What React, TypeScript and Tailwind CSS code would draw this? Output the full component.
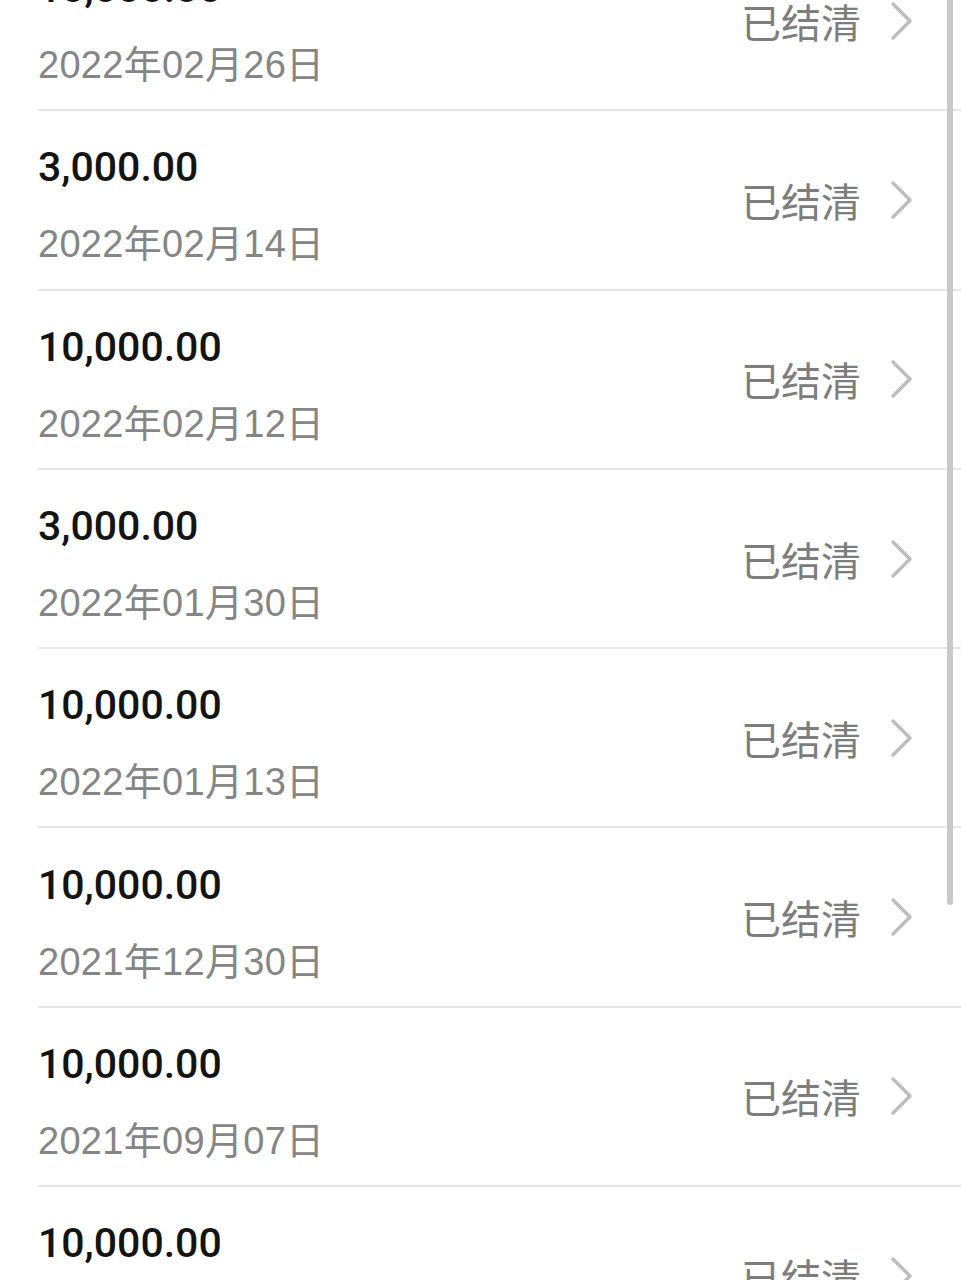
const rows = [
  { amount: "10,000.00", date: "2022年02月26日" },
  { amount: "3,000.00", date: "2022年02月14日" },
  { amount: "10,000.00", date: "2022年02月12日" },
  { amount: "3,000.00", date: "2022年01月30日" },
  { amount: "10,000.00", date: "2022年01月13日" },
  { amount: "10,000.00", date: "2021年12月30日" },
  { amount: "10,000.00", date: "2021年09月07日" },
  { amount: "10,000.00", date: "2021年08月20日" },
];

const Chevron = () => (
  <svg width="26" height="40" viewBox="0 0 26 40" fill="none">
    <path d="M4 3 L21 20 L4 37" stroke="#bdbdbd" strokeWidth="3.5" strokeLinecap="round" strokeLinejoin="round" />
  </svg>
);

export default function App() {
  return (
    <div className="relative w-[961px] h-[1280px] overflow-hidden bg-white">
      <div className="-mt-[68px]">
        {rows.map((row, i) => (
          <div key={i} className="h-[179.3px] pl-[38px]">
            <div className="flex h-full items-center justify-between border-b-2 border-[#e6e6e6] pr-[46px]">
              <div className="flex flex-col pt-[10px]">
                <div className="text-[41px] leading-[48px] font-medium text-[#141414] font-['Roboto','Noto_Sans_CJK_SC',sans-serif]">
                  {row.amount}
                </div>
                <div className="mt-[31px] text-[38px] tracking-[0.3px] leading-[44px] text-[#858585] font-['Liberation_Sans','Noto_Sans_CJK_SC',sans-serif]">
                  {row.date}
                </div>
              </div>
              <div className="flex items-center gap-[28px]">
                <span className="text-[40px] leading-[44px] text-[#7d7d7d] font-['Noto_Sans_CJK_SC',sans-serif]">
                  已结清
                </span>
                <Chevron />
              </div>
            </div>
          </div>
        ))}
      </div>
      <div className="absolute right-[8px] top-0 h-[905px] w-[6px] rounded-b-full bg-[#c8c8c8]" />
    </div>
  );
}
